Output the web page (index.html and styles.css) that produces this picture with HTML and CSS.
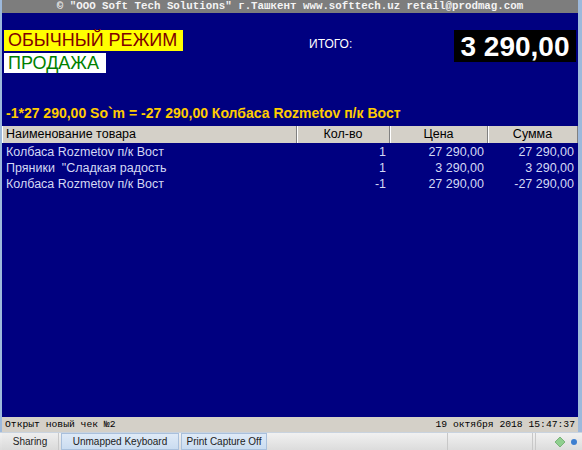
FILE: index.html
```html
<!DOCTYPE html>
<html>
<head>
  <meta charset="utf-8">
  <title>Касса</title>
  <link rel="stylesheet" href="styles.css">
</head>
<body>
  <div class="window">
    <div class="titlebar">© "OOO Soft Tech Solutions" г.Ташкент www.softtech.uz retail@prodmag.com</div>

    <div class="main">
      <div class="top">
        <div class="modes">
          <span class="mode mode-regular">ОБЫЧНЫЙ РЕЖИМ</span>
          <span class="mode mode-sale">ПРОДАЖА</span>
        </div>
        <div class="total-label">ИТОГО:</div>
        <div class="total">3 290,00</div>
      </div>

      <div class="message">-1*27 290,00 So`m = -27 290,00 Колбаса Rozmetov п/к Вост</div>

      <div class="grid">
        <div class="cell head name">Наименование товара</div>
        <div class="cell head">Кол-во</div>
        <div class="cell head">Цена</div>
        <div class="cell head">Сумма</div>

        <div class="cell name">Колбаса Rozmetov п/к Вост</div>
        <div class="cell num">1</div>
        <div class="cell num">27 290,00</div>
        <div class="cell num">27 290,00</div>

        <div class="cell name">Пряники&nbsp; "Сладкая радость</div>
        <div class="cell num">1</div>
        <div class="cell num">3 290,00</div>
        <div class="cell num">3 290,00</div>

        <div class="cell name">Колбаса Rozmetov п/к Вост</div>
        <div class="cell num">-1</div>
        <div class="cell num">27 290,00</div>
        <div class="cell num">-27 290,00</div>
      </div>
    </div>

    <div class="status">
      <span>Открыт новый чек №2</span>
      <span>19 октября 2018 15:47:37</span>
    </div>

    <div class="taskbar">
      <div class="tab">Sharing</div>
      <div class="tab active wide">Unmapped Keyboard</div>
      <div class="tab active">Print Capture Off</div>
      <div class="spacer"></div>
      <div class="slot"></div>
      <div class="slot small"></div>
      <div class="tray">
        <svg width="12" height="12" viewBox="0 0 12 12">
          <path d="M6 1 L11 6 L6 11 L1 6 Z" fill="#8fcf8f" stroke="#6aa86a" stroke-width="0.8"/>
        </svg>
        <svg width="8" height="8" viewBox="0 0 8 8">
          <circle cx="4" cy="4" r="3" fill="#3d7fd0"/>
        </svg>
      </div>
    </div>
  </div>
</body>
</html>
```

FILE: styles.css
```css
body {
  margin: 0;
  background: #9db9dc;
  font-family: 'Liberation Sans', Arial, sans-serif;
}

.window {
  width: 582px;
  height: 450px;
  display: flex;
  flex-direction: column;
  box-sizing: border-box;
}

.titlebar {
  height: 13px;
  margin: 0 4px 0 2px;
  background: #7d7d7d;
  color: #f4f4f4;
  font-family: 'Liberation Mono', 'Courier New', monospace;
  font-size: 10.8px;
  font-weight: bold;
  line-height: 12px;
  text-align: center;
  white-space: nowrap;
}

.main {
  flex: 1;
  margin: 0 4px 0 2px;
  background: #000080;
  display: flex;
  flex-direction: column;
}

.top {
  display: flex;
  align-items: flex-start;
  padding: 17px 0 0 2px;
  height: 61px;
}

.modes {
  display: flex;
  flex-direction: column;
  align-items: flex-start;
  gap: 2px;
  width: 305px;
}

.mode {
  font-size: 18px;
  line-height: 21px;
  height: 21px;
  padding: 0 6px 0 4px;
}

.mode-regular {
  background: #ffff00;
  color: #800000;
}

.mode-sale {
  background: #ffffff;
  color: #008000;
  height: 20px;
  line-height: 20px;
  padding-right: 7px;
}

.total-label {
  color: #ffffff;
  font-size: 12px;
  margin-top: 7px;
  width: 145px;
}

.total {
  background: #000000;
  color: #ffffff;
  font-size: 28px;
  font-weight: bold;
  height: 32px;
  line-height: 33px;
  width: 122px;
  text-align: center;
}

.message {
  color: #ffcc00;
  font-size: 14px;
  font-weight: bold;
  padding: 14px 0 0 4px;
  height: 21px;
  line-height: 17px;
}

.grid {
  display: grid;
  grid-template-columns: 295px 93px 98px 90px;
  font-size: 12.5px;
}

.cell {
  height: 16px;
  line-height: 16px;
  color: #d4d8f4;
  padding: 0 4px;
  white-space: nowrap;
  overflow: hidden;
}

.cell.num {
  text-align: right;
}

.cell.head {
  background: #d4d0c8;
  color: #000000;
  text-align: center;
  height: 17px;
  line-height: 17px;
  margin-bottom: 1px;
  border-right: 1px solid #808080;
  box-shadow: inset 1px 0 0 #ffffff;
}

.cell.head.name {
  text-align: left;
}

.status {
  height: 15px;
  margin: 0 4px 0 2px;
  background: #d4d0c8;
  display: flex;
  justify-content: space-between;
  align-items: center;
  padding: 0 3px;
  font-family: 'Liberation Mono', 'Courier New', monospace;
  font-size: 9.7px;
  color: #000000;
}

.taskbar {
  height: 17px;
  display: flex;
  align-items: stretch;
  background: linear-gradient(#f1f1f1, #dcdcdc);
  border-top: 1px solid #c9d3df;
  font-size: 10px;
  color: #222;
}

.tab {
  width: 56px;
  margin-left: 2px;
  display: flex;
  align-items: center;
  justify-content: center;
  background: linear-gradient(#eeeeee, #dadada);
  border-right: 1px solid #c8c8c8;
}

.tab.active {
  width: 84px;
  margin-left: 2px;
  background: linear-gradient(#dfeaf7, #cadcf0);
  border: 1px solid #a9c0dc;
}

.tab.wide {
  width: 116px;
}

.spacer {
  flex: 1;
  border-right: 1px solid #c8c8c8;
}

.slot {
  width: 84px;
  border-right: 1px solid #c8c8c8;
}

.slot.small {
  width: 2px;
}

.tray {
  width: 42px;
  display: flex;
  align-items: center;
  justify-content: flex-end;
  gap: 4px;
  padding-right: 4px;
}
```
